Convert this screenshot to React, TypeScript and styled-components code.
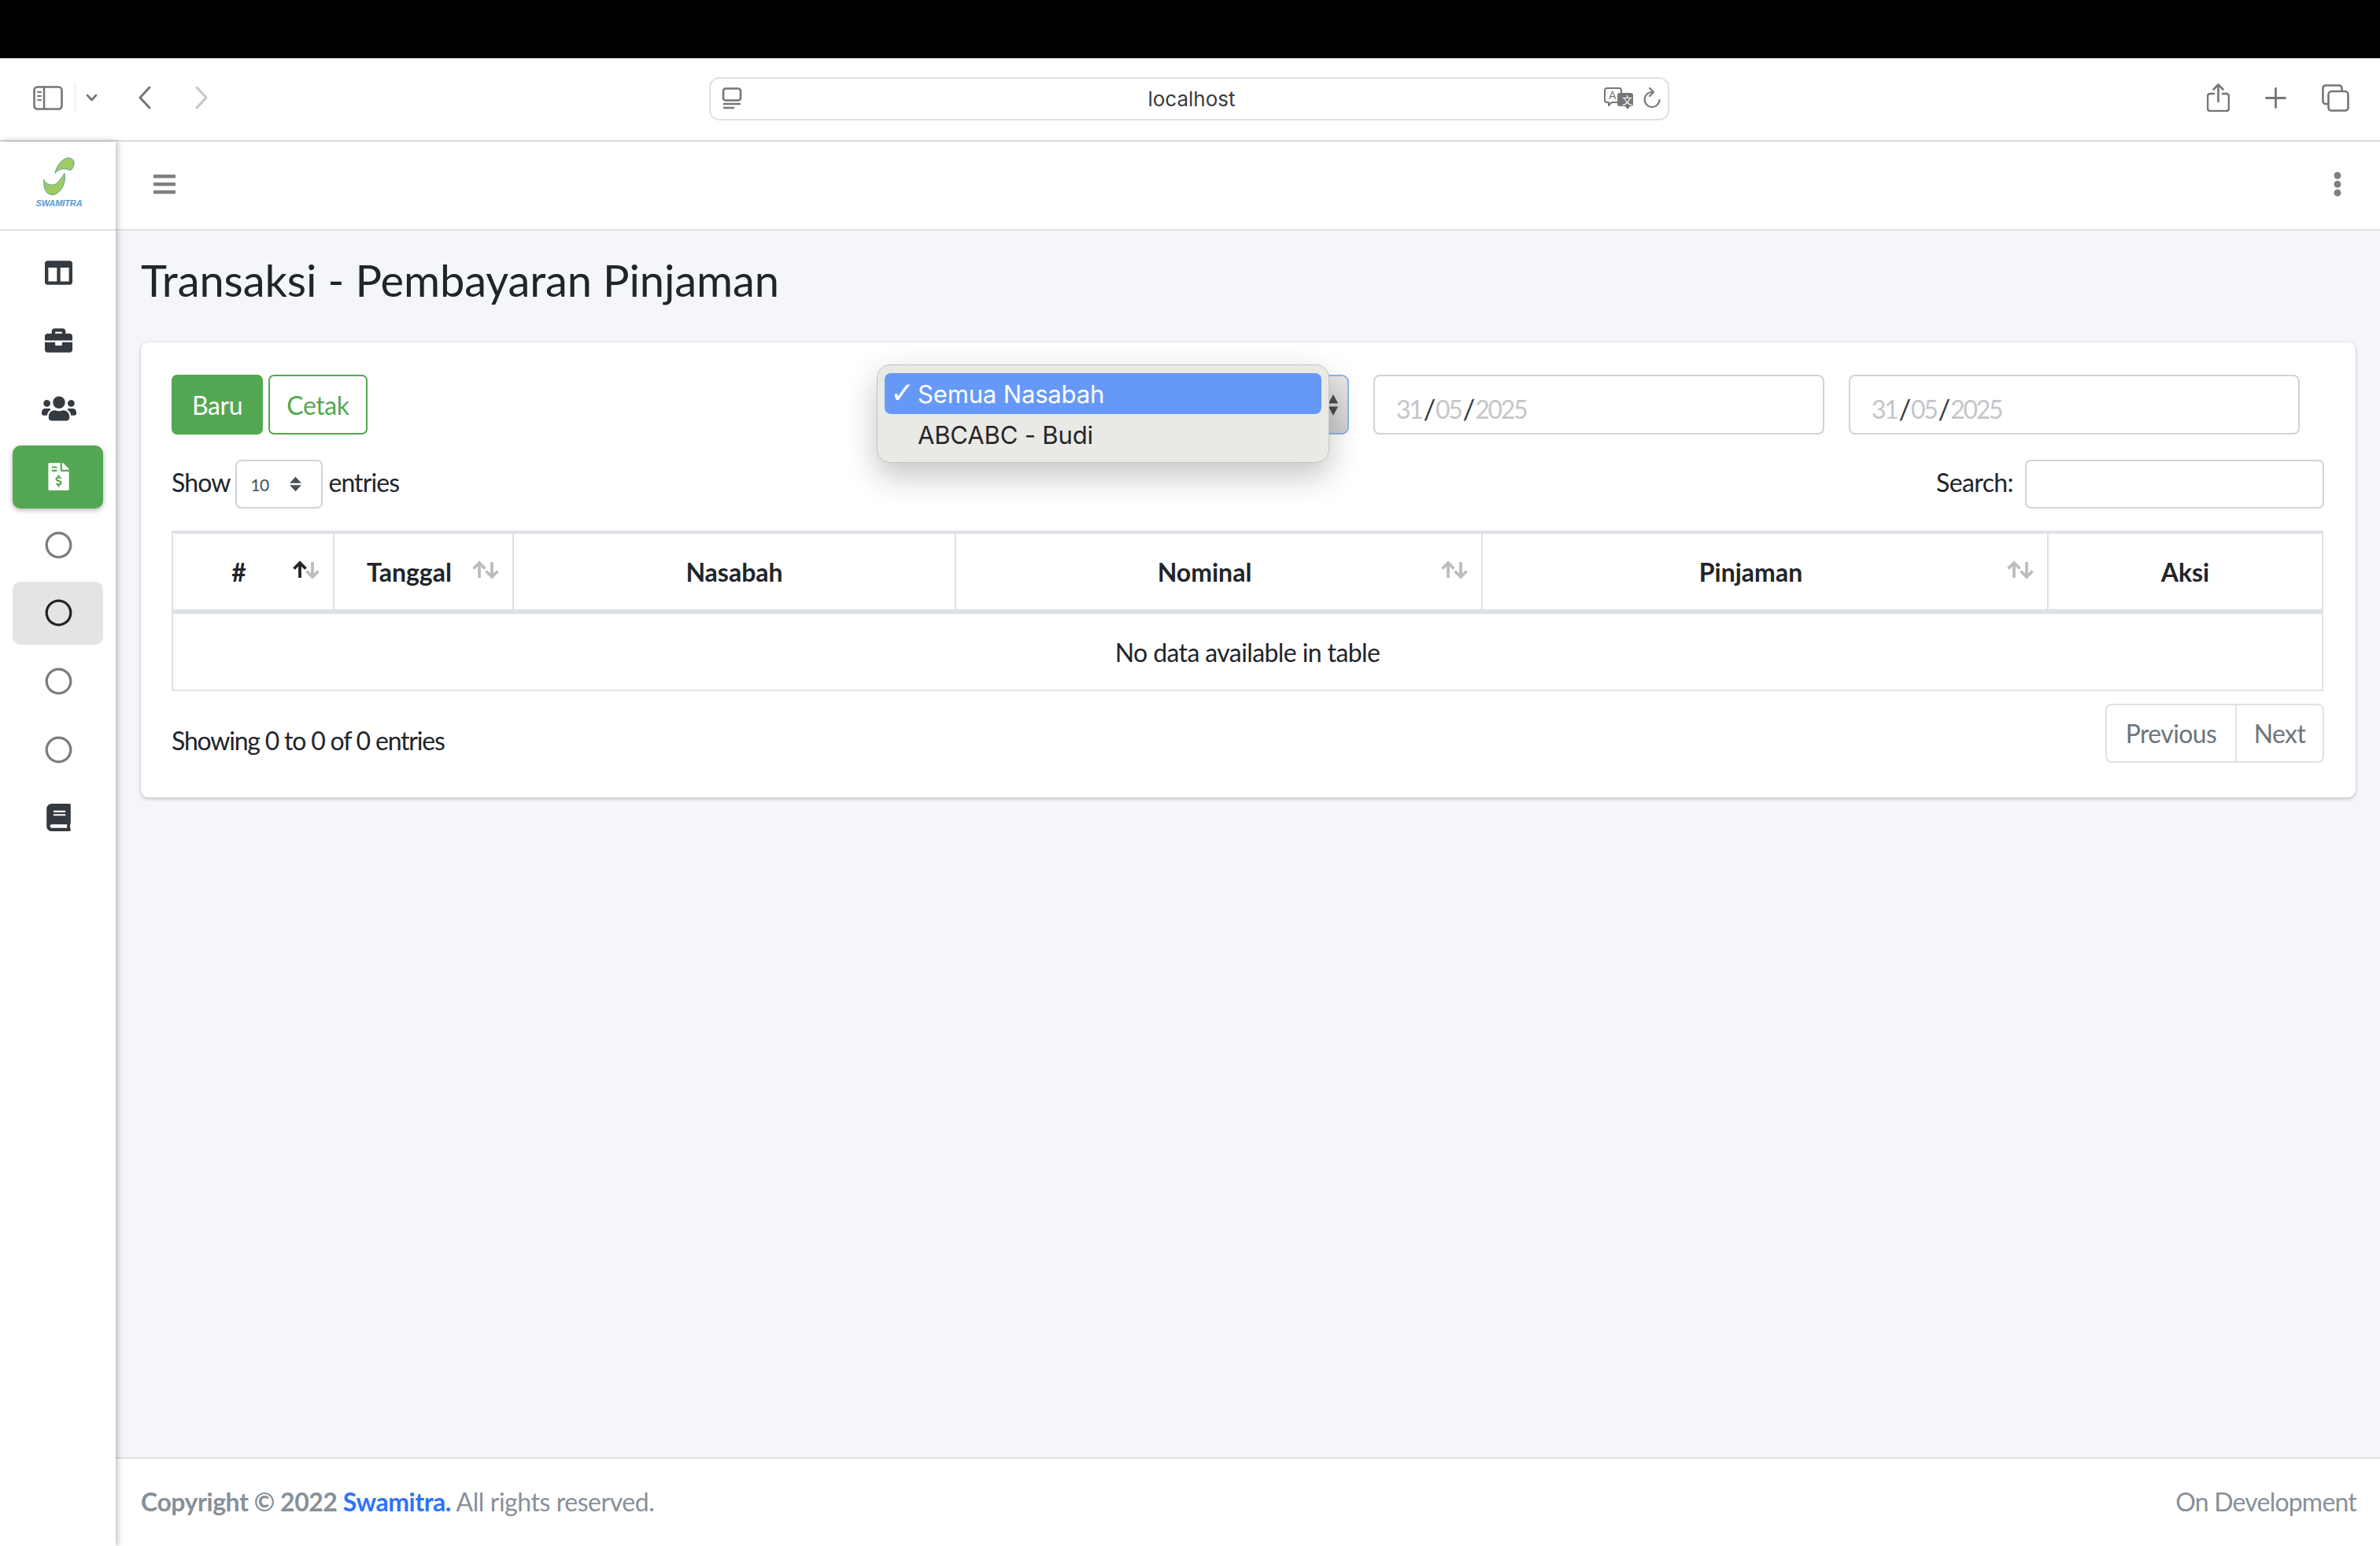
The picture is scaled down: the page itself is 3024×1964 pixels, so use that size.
import React from "react";
import styled, { createGlobalStyle } from "styled-components";
import {
  FaBars,
  FaBook,
  FaBriefcase,
  FaColumns,
  FaEllipsisV,
  FaFileInvoiceDollar,
  FaRegCircle,
  FaUsers,
} from "react-icons/fa";

const GlobalStyle = createGlobalStyle`
  * { box-sizing: border-box; }
  html, body { margin: 0; padding: 0; background: #f4f6f9; }
  body {
    width: 3024px;
    height: 1964px;
    overflow: hidden;
    font-family: "Lato", "Noto Sans", sans-serif;
    font-size: 32px;
    letter-spacing: -0.6px;
    color: #212529;
  }
`;

const Page = styled.div`
  width: 3024px;
  height: 1964px;
  display: flex;
  flex-direction: column;
`;

const Notch = styled.div`
  height: 74px;
  background: #000;
`;

/* browser chrome */
const BrowserBar = styled.div`
  height: 106px;
  display: grid;
  grid-template-columns: 901px 1220px 1fr;
  align-items: center;
  background: #fff;
  border-bottom: 2px solid #dcdcdc;
  padding-bottom: 4px;
`;

const ChromeLeft = styled.div`
  display: flex;
  align-items: center;
  padding-left: 42px;
`;

const ChromeIcon = styled.svg<{ $ml?: number }>`
  display: block;
  flex: none;
  margin-left: ${(p) => p.$ml ?? 0}px;
`;

const ChromeSep = styled.div`
  width: 1px;
  height: 36px;
  margin-left: 15px;
  background: #e4e4e4;
`;

const AddressBar = styled.div`
  height: 55px;
  margin-top: 2px;
  display: grid;
  grid-template-columns: 1fr auto 1fr;
  align-items: center;
  padding: 0 8px 0 14px;
  border: 2px solid #e0e0e0;
  border-radius: 13px;
`;

const AddressText = styled.div`
  font-family: "Inter", "Liberation Sans", sans-serif;
  font-size: 26px;
  letter-spacing: 0;
  color: #3c3c3c;
`;

const AddressTools = styled.div`
  display: flex;
  justify-content: flex-end;
  align-items: center;
  gap: 10px;
`;

const ChromeRight = styled.div`
  display: flex;
  justify-content: flex-end;
  align-items: center;
  gap: 45px;
  padding-right: 39px;
`;

/* app shell */
const Shell = styled.div`
  flex: 1;
  display: flex;
  min-height: 0;
`;

const Sidebar = styled.aside`
  width: 147px;
  flex: none;
  position: relative;
  z-index: 2;
  background: #fff;
  box-shadow: 2px 0 8px rgba(0, 0, 0, 0.28);
`;

const LogoBox = styled.div`
  height: 113px;
  display: flex;
  flex-direction: column;
  align-items: center;
  padding: 19px 0 0 3px;
  border-bottom: 2px solid #dee2e6;
`;

const LogoText = styled.div`
  margin-top: 4px;
  font-family: "Liberation Sans", sans-serif;
  font-size: 11px;
  line-height: 11px;
  letter-spacing: -0.1px;
  font-weight: 700;
  font-style: italic;
  color: #5b9bd0;
`;

const Nav = styled.nav`
  display: flex;
  flex-direction: column;
  gap: 6.6px;
  padding: 13px 16px 0;
`;

const NavItem = styled.div<{ $state?: "green" | "gray"; $soft?: boolean }>`
  height: 80px;
  display: flex;
  align-items: center;
  justify-content: center;
  padding-left: 2px;
  font-size: 35px;
  border-radius: 10px;
  color: ${(p) =>
    p.$state === "green" ? "#fff" : p.$state === "gray" ? "#212529" : p.$soft ? "#7c7c7c" : "#343a40"};
  background: ${(p) =>
    p.$state === "green" ? "#54a752" : p.$state === "gray" ? "#e4e4e4" : "transparent"};
  box-shadow: ${(p) => (p.$state === "green" ? "0 2px 6px rgba(0,0,0,.3)" : "none")};
`;

const Main = styled.div`
  flex: 1;
  min-width: 0;
  display: flex;
  flex-direction: column;
`;

const Navbar = styled.header`
  height: 113px;
  flex: none;
  display: flex;
  align-items: center;
  justify-content: space-between;
  padding: 0 38px 3px 46px;
  font-size: 32px;
  color: #7f7f7f;
  background: #fff;
  border-bottom: 2px solid #dee2e6;
`;

const Content = styled.main`
  flex: 1;
  padding: 29px 31px 0 32px;
`;

const Title = styled.h1`
  margin: 0 0 46px;
  font-size: 56px;
  line-height: 67px;
  letter-spacing: -0.1px;
  font-weight: 400;
  color: #212529;
`;

const Card = styled.section`
  height: 578px;
  padding: 41px 40px 44px 39px;
  background: #fff;
  border-radius: 9px;
  box-shadow: 0 0 2px rgba(0, 0, 0, 0.13), 0 2px 5px rgba(0, 0, 0, 0.2);
`;

const Toolbar = styled.div`
  height: 76px;
  display: flex;
  justify-content: space-between;
  padding-right: 31px;
`;

const ButtonGroup = styled.div`
  display: flex;
  gap: 7px;
`;

const Button = styled.button<{ $outline?: boolean; $w: number }>`
  width: ${(p) => p.$w}px;
  height: 76px;
  padding: 0;
  font: inherit;
  letter-spacing: -0.4px;
  border-radius: 7px;
  border: 2px solid #54a752;
  color: ${(p) => (p.$outline ? "#54a752" : "#fff")};
  background: ${(p) => (p.$outline ? "#fff" : "#54a752")};
`;

const Filters = styled.div`
  display: flex;
  gap: 31px;
`;

const SelectWrap = styled.div`
  position: relative;
  width: 573px;
`;

const NativeSelect = styled.div`
  height: 76px;
  display: flex;
  align-items: center;
  justify-content: flex-end;
  padding-right: 11px;
  border: 2px solid #8db5ee;
  border-radius: 9px;
  background: linear-gradient(#e8e8e8, #cfcfcf);
`;

const Popup = styled.div`
  position: absolute;
  left: -27px;
  top: -13px;
  width: 575px;
  height: 125px;
  padding: 10px 9px;
  border: 1px solid #c3c3c0;
  border-radius: 17px;
  background: #e9e9e6;
  box-shadow: 0 16px 40px rgba(0, 0, 0, 0.24);
  font-family: "Inter", "Liberation Sans", sans-serif;
  font-size: 31px;
  letter-spacing: -0.15px;
`;

const PopupOption = styled.div<{ $selected?: boolean }>`
  height: 52px;
  display: flex;
  align-items: center;
  padding-left: 42px;
  position: relative;
  border-radius: 8px;
  color: ${(p) => (p.$selected ? "#fff" : "#262626")};
  background: ${(p) => (p.$selected ? "#6699f7" : "transparent")};
`;

const Check = styled.span`
  position: absolute;
  left: 7px;
  top: 4px;
  font-family: "DejaVu Sans", sans-serif;
  font-size: 37px;
  font-weight: 700;
`;

const DateBox = styled.div`
  width: 573px;
  height: 76px;
  display: flex;
  align-items: center;
  padding: 10px 0 0 27px;
  border: 2px solid #ced4da;
  border-radius: 8px;
  background: #fff;
  letter-spacing: -2.3px;
`;

const DatePart = styled.span`
  color: #c4c6ca;
`;

const DateSlash = styled.span`
  margin: 0 2px;
  font-size: 35px;
  line-height: 1;
  color: #343a40;
`;

const ControlRow = styled.div`
  height: 62px;
  margin-top: 32px;
  display: flex;
  justify-content: space-between;
  align-items: center;
`;

const ControlLabel = styled.label<{ $gap: number }>`
  display: flex;
  align-items: center;
  gap: ${(p) => p.$gap}px;
`;

const LabelText = styled.span<{ $tight?: boolean }>`
  position: relative;
  top: -3px;
  letter-spacing: ${(p) => (p.$tight ? -0.9 : -0.6)}px;
`;

const LengthSelect = styled.div`
  width: 111px;
  height: 62px;
  display: flex;
  align-items: center;
  justify-content: space-between;
  padding: 0 24px 0 17px;
  border: 2px solid #ced4da;
  border-radius: 7px;
  font-size: 21px;
  color: #495057;
`;

const SearchInput = styled.input`
  width: 380px;
  height: 62px;
  margin-left: 7px;
  border: 2px solid #ced4da;
  border-radius: 7px;
  outline: none;
  background: #fff;
`;

const Table = styled.table`
  width: 2734px;
  margin-top: 28px;
  table-layout: fixed;
  border-collapse: separate;
  border-spacing: 0;
  border-left: 2px solid #dee2e6;
  border-top: 4px solid #dee2e6;
`;

const Th = styled.th<{ $w: number; $sortable?: boolean }>`
  width: ${(p) => p.$w}px;
  height: 102px;
  position: relative;
  padding: 0 ${(p) => (p.$sortable ? 52 : 16)}px 0 16px;
  text-align: center;
  font-weight: 700;
  letter-spacing: 0;
  border-right: 2px solid #dee2e6;
  border-bottom: 6px solid #dee2e6;
`;

const SortIcon = styled.svg`
  position: absolute;
  right: 17px;
  top: 50%;
  margin-top: -14px;
`;

const Td = styled.td`
  height: 98px;
  text-align: center;
  border-right: 2px solid #dee2e6;
  border-bottom: 2px solid #dee2e6;
`;

const TableFoot = styled.div`
  margin-top: 16px;
  display: flex;
  justify-content: space-between;
  align-items: flex-start;
`;

const Info = styled.div`
  margin-top: 23px;
  line-height: 48px;
  letter-spacing: -1.2px;
`;

const Pagination = styled.div`
  height: 75px;
  display: flex;
  border: 2px solid #dee2e6;
  border-radius: 8px;
`;

const PageLink = styled.div<{ $w: number; $divider?: boolean }>`
  width: ${(p) => p.$w}px;
  display: flex;
  align-items: center;
  justify-content: center;
  color: #6c757d;
  border-left: ${(p) => (p.$divider ? "2px solid #dee2e6" : "none")};
`;

const Footer = styled.footer`
  height: 113px;
  flex: none;
  display: flex;
  align-items: center;
  justify-content: space-between;
  padding: 0 30px 2px 32px;
  color: #869099;
  background: #fff;
  border-top: 2px solid #dee2e6;
  letter-spacing: -0.45px;
`;

const Strong = styled.strong`
  font-weight: 700;
`;

const BrandLink = styled.span`
  color: #2f74f5;
`;

const FooterNote = styled.div`
  letter-spacing: -0.8px;
`;

const stroke = { fill: "none", stroke: "#767676", strokeWidth: 2.6, strokeLinecap: "round", strokeLinejoin: "round" } as const;

function Logo() {
  return (
    <svg width="42" height="50" viewBox="105 40 125 150">
      <path
        d="M152 104C158 74 178 48 202 45C216 44 227 55 225 66C223 78 218 92 208 92C194 84 170 82 152 104Z"
        fill="#9ecb62"
        stroke="#5aa3a0"
        strokeWidth="3"
      />
      <path
        d="M188 103C194 127 186 162 160 180C142 191 122 184 115 167C110 154 108 141 110 128C118 148 150 158 168 132C176 122 183 114 188 103Z"
        fill="#9ecb62"
        stroke="#5aa3a0"
        strokeWidth="3"
      />
    </svg>
  );
}

function SortArrows({ active }: { active?: boolean }) {
  const up = active ? "#212529" : "#bdbdbd";
  return (
    <SortIcon width="34" height="24" viewBox="0 0 34 24" fill="none" strokeWidth="3.8">
      <path d="M9 22V3M1.500 10.500L9 3l7.500 7.500" stroke={up} />
      <path d="M25 2v19M17.500 13.500L25 21l7.500-7.500" stroke="#bdbdbd" />
    </SortIcon>
  );
}

function UpDown({ color, width, height }: { color: string; width: number; height: number }) {
  return (
    <svg width={width} height={height} viewBox="0 0 16 30" preserveAspectRatio="none">
      <path d="M8 1l7 12H1zM8 29L1 17h14z" fill={color} />
    </svg>
  );
}

function DateField() {
  return (
    <DateBox>
      <DatePart>31</DatePart>
      <DateSlash>/</DateSlash>
      <DatePart>05</DatePart>
      <DateSlash>/</DateSlash>
      <DatePart>2025</DatePart>
    </DateBox>
  );
}

export default function App() {
  return (
    <Page>
      <GlobalStyle />
      <Notch />
      <BrowserBar>
        <ChromeLeft>
          <ChromeIcon width="38" height="31" viewBox="0 0 38 31">
            <rect x="1.500" y="1.500" width="35" height="28" rx="4" {...stroke} />
            <path d="M14 2v27" {...stroke} />
            <path d="M6 8h4M6 13h4M6 18h4" {...stroke} strokeWidth="2" />
          </ChromeIcon>
          <ChromeSep />
          <ChromeIcon $ml={13} width="15" height="10" viewBox="0 0 15 10">
            <path d="M2 2l5.500 6L13 2" {...stroke} />
          </ChromeIcon>
          <ChromeIcon $ml={52} width="16" height="30" viewBox="0 0 16 30">
            <path d="M14 2L2 15l12 13" {...stroke} strokeWidth="3" />
          </ChromeIcon>
          <ChromeIcon $ml={56} width="16" height="30" viewBox="0 0 16 30">
            <path d="M2 2l12 13L2 28" {...stroke} strokeWidth="3" stroke="#c6c6c6" />
          </ChromeIcon>
        </ChromeLeft>
        <AddressBar>
          <ChromeIcon width="26" height="28" viewBox="0 0 26 28">
            <rect x="2" y="1.500" width="22" height="15" rx="3" {...stroke} />
            <path d="M2 21h22M2 26h14" {...stroke} strokeLinecap="butt" />
          </ChromeIcon>
          <AddressText>localhost</AddressText>
          <AddressTools>
            <ChromeIcon width="40" height="30" viewBox="0 0 40 30">
              <path d="M5 2h15a3 3 0 0 1 3 3v12a3 3 0 0 1-3 3h-9l-4 4v-4H5a3 3 0 0 1-3-3V5a3 3 0 0 1 3-3z" {...stroke} strokeWidth="2" />
              <text x="7" y="16" fontSize="14" fontFamily="Liberation Sans" fill="#767676">A</text>
              <path d="M21 8h14a3 3 0 0 1 3 3v11a3 3 0 0 1-3 3h-1l-3 4-3-4h-7a3 3 0 0 1-3-3V11a3 3 0 0 1 3-3z" fill="#767676" />
              <text x="24" y="22" fontSize="13" fontFamily="Noto Sans CJK SC" fill="#fff">文</text>
            </ChromeIcon>
            <ChromeIcon width="24" height="30" viewBox="0 0 24 30">
              <path d="M12 7A9.500 9.500 0 1 0 21.500 17" {...stroke} strokeWidth="2.200" />
              <path d="M9 2l5 5-5 5" {...stroke} strokeWidth="2.200" />
            </ChromeIcon>
          </AddressTools>
        </AddressBar>
        <ChromeRight>
          <ChromeIcon width="29" height="36" viewBox="0 0 29 36">
            <path d="M9 13H4a3 3 0 0 0-3 3v16a3 3 0 0 0 3 3h21a3 3 0 0 0 3-3V16a3 3 0 0 0-3-3h-5" {...stroke} />
            <path d="M14.500 23V2M8.500 7.500l6-6 6 6" {...stroke} />
          </ChromeIcon>
          <ChromeIcon width="27" height="27" viewBox="0 0 27 27">
            <path d="M13.500 1.500v24M1.500 13.500h24" {...stroke} strokeWidth="2.800" />
          </ChromeIcon>
          <ChromeIcon width="35" height="35" viewBox="0 0 35 35">
            <path d="M7 25H5a3.500 3.500 0 0 1-3.500-3.500V5A3.500 3.500 0 0 1 5 1.500h17A3.500 3.500 0 0 1 25.500 5v3" {...stroke} />
            <rect x="8.500" y="9" width="25" height="24.500" rx="4" {...stroke} />
          </ChromeIcon>
        </ChromeRight>
      </BrowserBar>
      <Shell>
        <Sidebar>
          <LogoBox>
            <Logo />
            <LogoText>SWAMITRA</LogoText>
          </LogoBox>
          <Nav>
            <NavItem><FaColumns /></NavItem>
            <NavItem><FaBriefcase /></NavItem>
            <NavItem><FaUsers size={44} /></NavItem>
            <NavItem $state="green"><FaFileInvoiceDollar /></NavItem>
            <NavItem $soft><FaRegCircle /></NavItem>
            <NavItem $state="gray"><FaRegCircle /></NavItem>
            <NavItem $soft><FaRegCircle /></NavItem>
            <NavItem $soft><FaRegCircle /></NavItem>
            <NavItem><FaBook /></NavItem>
          </Nav>
        </Sidebar>
        <Main>
          <Navbar>
            <FaBars />
            <FaEllipsisV />
          </Navbar>
          <Content>
            <Title>Transaksi - Pembayaran Pinjaman</Title>
            <Card>
              <Toolbar>
                <ButtonGroup>
                  <Button $w={116}>Baru</Button>
                  <Button $w={126} $outline>Cetak</Button>
                </ButtonGroup>
                <Filters>
                  <SelectWrap>
                    <NativeSelect>
                      <UpDown color="#4b4f55" width={14} height={29} />
                    </NativeSelect>
                    <Popup>
                      <PopupOption $selected>
                        <Check>✓</Check>
                        Semua Nasabah
                      </PopupOption>
                      <PopupOption>ABCABC - Budi</PopupOption>
                    </Popup>
                  </SelectWrap>
                  <DateField />
                  <DateField />
                </Filters>
              </Toolbar>
              <ControlRow>
                <ControlLabel $gap={7}>
                  <LabelText $tight>Show</LabelText>
                  <LengthSelect>
                    10
                    <UpDown color="#495057" width={17} height={20} />
                  </LengthSelect>
                  <LabelText $tight>entries</LabelText>
                </ControlLabel>
                <ControlLabel $gap={8}>
                  <LabelText>Search:</LabelText>
                  <SearchInput />
                </ControlLabel>
              </ControlRow>
              <Table>
                <thead>
                  <tr>
                    <Th $w={205} $sortable># <SortArrows active /></Th>
                    <Th $w={228} $sortable>Tanggal <SortArrows /></Th>
                    <Th $w={562}>Nasabah</Th>
                    <Th $w={669} $sortable>Nominal <SortArrows /></Th>
                    <Th $w={719} $sortable>Pinjaman <SortArrows /></Th>
                    <Th $w={349}>Aksi</Th>
                  </tr>
                </thead>
                <tbody>
                  <tr>
                    <Td colSpan={6}>No data available in table</Td>
                  </tr>
                </tbody>
              </Table>
              <TableFoot>
                <Info>Showing 0 to 0 of 0 entries</Info>
                <Pagination>
                  <PageLink $w={163}>Previous</PageLink>
                  <PageLink $w={111} $divider>Next</PageLink>
                </Pagination>
              </TableFoot>
            </Card>
          </Content>
          <Footer>
            <div>
              <Strong>Copyright © 2022 <BrandLink>Swamitra.</BrandLink></Strong> All rights reserved.
            </div>
            <FooterNote>On Development</FooterNote>
          </Footer>
        </Main>
      </Shell>
    </Page>
  );
}
